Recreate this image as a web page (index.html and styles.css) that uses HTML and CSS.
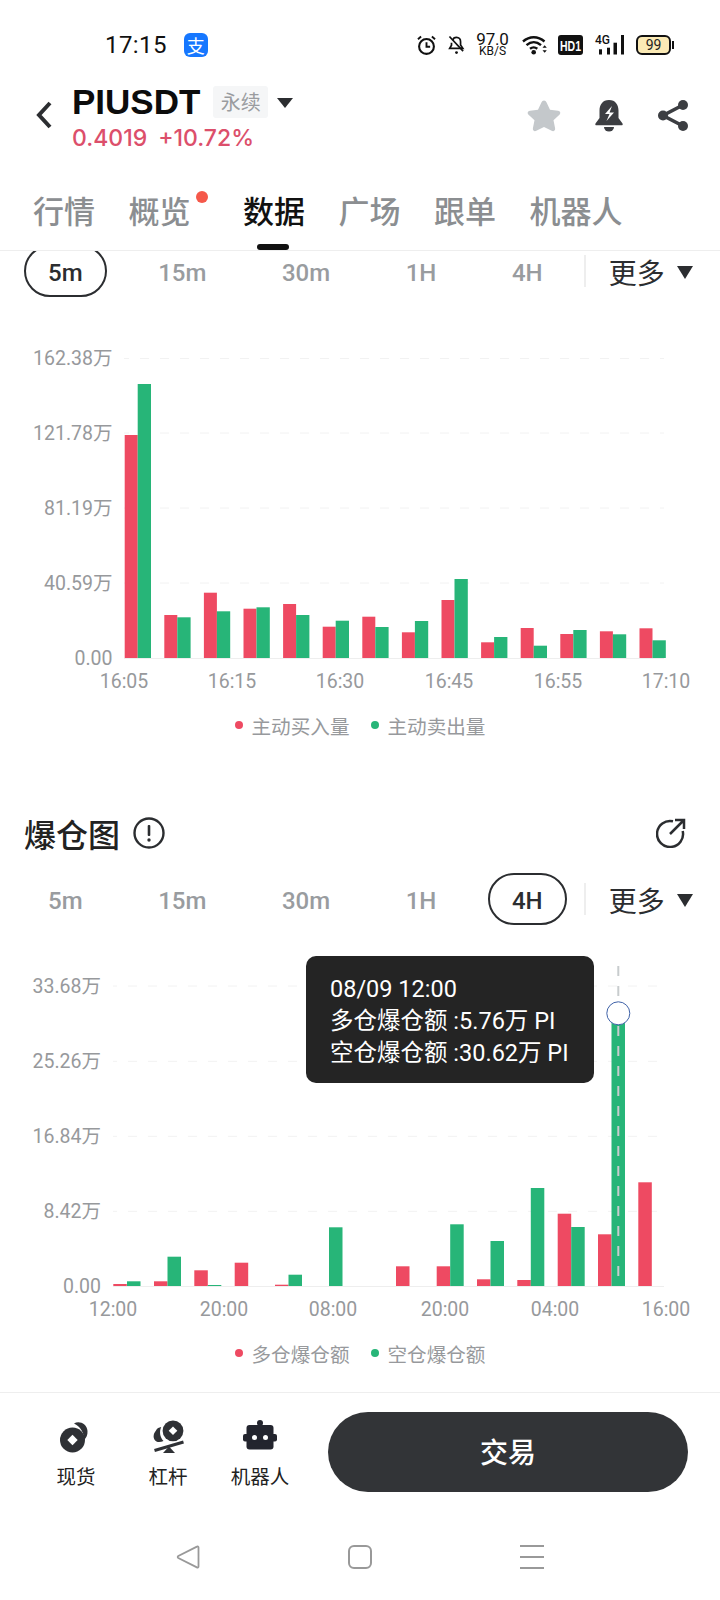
FILE: index.html
```html
<!DOCTYPE html>
<html lang="zh-CN">
<head>
<meta charset="utf-8">
<title>PIUSDT</title>
<link rel="stylesheet" href="styles.css">
</head>
<body>
<div class="phone">
  <div class="status">
    <span class="clock">17:15</span>
    <span class="alipay">支</span>
    <div class="status-icons">
      <svg class="ico" width="19" height="20" viewBox="0 0 20 21"><circle cx="10" cy="12" r="7.8" fill="none" stroke="#111" stroke-width="2.200"/><path d="M10 7.500V12.400H13.800M1 4.500 4.300 1.600M19 4.500 15.700 1.600" fill="none" stroke="#111" stroke-width="2"/></svg>
      <svg class="ico" width="17" height="20" viewBox="0 0 18 21"><path d="M5 5.500C5.500 3.500 7 2.500 9 2.500c2.800 0 4.300 2 4.300 4.500v3.500l2.400 3.500H1.800l1.900-3.200V8" fill="none" stroke="#111" stroke-width="1.800"/><path d="M1.500 1.500 16 17" stroke="#111" stroke-width="1.800"/><circle cx="9" cy="18.500" r="1.500" fill="#111"/></svg>
      <div class="speed"><span class="speed-n">97.0</span><span class="speed-u">KB/S</span></div>
      <svg class="ico wifi" width="25" height="20" viewBox="0 0 25 20"><path d="M1 6.500C7.500.8 16 .8 22.500 6.500M4.500 10.200C9 6.300 14.500 6.300 19 10.200M8 13.800C10.300 12 13 12 15.300 13.800" fill="none" stroke="#111" stroke-width="2.400"/><circle cx="11.700" cy="17.300" r="2.300" fill="#111"/><path d="M20.500 12.800h4.300l-2.150-2.600zM20.500 15.200h4.300l-2.150 2.600z" fill="#111"/></svg>
      <svg class="ico" width="25" height="20" viewBox="0 0 25 20"><rect width="25" height="20" rx="3" fill="#111"/><text class="hd-t" x="2" y="15.500" textLength="21" lengthAdjust="spacingAndGlyphs">HD1</text></svg>
      <svg class="ico" width="29" height="20" viewBox="0 0 29 20"><text class="sig-t" x="0" y="9">4G</text><rect x="4" y="14.300" width="3" height="5.200" fill="#111"/><rect x="12" y="12.700" width="3" height="6.800" fill="#111"/><rect x="18.500" y="7.700" width="3.500" height="11.800" fill="#111"/><rect x="26" y="0" width="3" height="19.500" fill="#111"/></svg>
      <div class="battery"><span class="battery-body">99</span><span class="battery-nub"></span></div>
    </div>
  </div>

  <div class="header">
    <svg class="back" width="16" height="28" viewBox="0 0 16 28"><path d="M14 2 3 14l11 12" fill="none" stroke="#2c2e31" stroke-width="4"/></svg>
    <div class="symbol">
      <div class="symbol-top">
        <span class="pair">PIUSDT</span>
        <span class="tag">永续</span>
        <span class="caret caret-sm"></span>
      </div>
      <div class="price"><span>0.4019</span><span>+10.72%</span></div>
    </div>
    <div class="header-actions">
      <svg class="star" width="36" height="34" viewBox="0 0 36 34"><path d="M18 1.500c1.200 0 2 .8 2.600 2l3.400 7.300 8 1c2.300.3 3 2.400 1.400 4l-5.900 5.500 1.600 8c.4 2.200-1.500 3.600-3.400 2.500L18 28l-7.700 3.800c-1.900 1.100-3.800-.3-3.400-2.500l1.600-8L2.600 15.800c-1.600-1.600-.9-3.700 1.400-4l8-1 3.400-7.300c.6-1.200 1.400-2 2.600-2z" fill="#c4c8cb"/></svg>
      <svg width="30" height="34" viewBox="0 0 30 34"><path d="M15 1c6.500 0 9.500 5 9.500 10.500V19l4 5.500c.6 1 0 1.800-1 1.800h-25c-1 0-1.600-.8-1-1.800l4-5.500v-7.500C5.500 6 8.500 1 15 1z" fill="#3c3e42"/><path d="M10 28h10a5 4.500 0 0 1-10 0z" fill="#3c3e42"/><path d="M18 7 11 15h4.500l-3 7 7.500-8.500h-4.500z" fill="#fff"/></svg>
      <svg width="32" height="34" viewBox="0 0 32 34"><path d="M26 6 6 16.500 26 27" fill="none" stroke="#3c3e42" stroke-width="3.600"/><circle cx="26" cy="6" r="5" fill="#3c3e42"/><circle cx="6" cy="16.500" r="5" fill="#3c3e42"/><circle cx="26" cy="27" r="5" fill="#3c3e42"/></svg>
    </div>
  </div>

  <div class="tabs">
    <span class="tab">行情</span>
    <span class="tab tab-dot">概览</span>
    <span class="tab tab-on">数据</span>
    <span class="tab">广场</span>
    <span class="tab">跟单</span>
    <span class="tab">机器人</span>
  </div>

  <div class="main">
    <div class="periods periods-first">
      <span class="period period-on">5m</span>
      <span class="period">15m</span>
      <span class="period">30m</span>
      <span class="period">1H</span>
      <span class="period">4H</span>
      <span class="divider"></span>
      <span class="more">更多</span>
      <span class="caret"></span>
    </div>

    <svg class="chart" width="720" height="411" viewBox="0 297 720 411">
      <g class="grid"><path d="M124 358.500H664M124 433H664M124 508H664M124 583H664"/></g>
      <path class="base" d="M124 658.500H664"/>
      <g class="red">
        <rect x="124.700" y="435" width="13" height="223"/><rect x="164.300" y="615" width="13" height="43"/><rect x="203.900" y="592.700" width="13" height="65.300"/><rect x="243.500" y="608.700" width="13" height="49.300"/><rect x="283.100" y="604" width="13" height="54"/><rect x="322.700" y="626.700" width="13" height="31.300"/><rect x="362.300" y="616.700" width="13" height="41.300"/><rect x="401.900" y="632.300" width="13" height="25.700"/><rect x="441.500" y="600" width="13" height="58"/><rect x="481.100" y="642.300" width="13" height="15.700"/><rect x="520.700" y="628" width="13" height="30"/><rect x="560.300" y="634" width="13" height="24"/><rect x="599.900" y="631.300" width="13" height="26.700"/><rect x="639.500" y="628.300" width="13" height="29.700"/>
      </g>
      <g class="green">
        <rect x="137.700" y="384" width="13.300" height="274"/><rect x="177.300" y="617.300" width="13.300" height="40.700"/><rect x="216.900" y="611.300" width="13.300" height="46.700"/><rect x="256.500" y="607.300" width="13.300" height="50.700"/><rect x="296.100" y="615" width="13.300" height="43"/><rect x="335.700" y="620.700" width="13.300" height="37.300"/><rect x="375.300" y="627" width="13.300" height="31"/><rect x="414.900" y="621" width="13.300" height="37"/><rect x="454.500" y="579" width="13.300" height="79"/><rect x="494.100" y="637" width="13.300" height="21"/><rect x="533.700" y="645.700" width="13.300" height="12.300"/><rect x="573.300" y="630" width="13.300" height="28"/><rect x="612.900" y="634.300" width="13.300" height="23.700"/><rect x="652.500" y="640.300" width="13.300" height="17.700"/>
      </g>
      <g class="axis-y">
        <text x="112.500" y="365">162.38万</text><text x="112.500" y="439.500">121.78万</text><text x="112.500" y="514.500">81.19万</text><text x="112.500" y="589.500">40.59万</text><text x="112.500" y="665">0.00</text>
      </g>
      <g class="axis-x">
        <text x="124" y="688">16:05</text><text x="232" y="688">16:15</text><text x="340" y="688">16:30</text><text x="449" y="688">16:45</text><text x="558" y="688">16:55</text><text x="666" y="688">17:10</text>
      </g>
    </svg>
    <div class="legend">
      <span class="dot dot-red"></span><span>主动买入量</span>
      <span class="dot dot-green"></span><span>主动卖出量</span>
    </div>

    <div class="section-head">
      <span class="section-title">爆仓图</span>
      <svg class="info" width="32" height="32" viewBox="0 0 32 32"><circle cx="16" cy="16" r="14.500" fill="none" stroke="#2b2d30" stroke-width="2.400"/><rect x="14.700" y="8" width="2.600" height="11" rx="1" fill="#2b2d30"/><circle cx="16" cy="23" r="1.700" fill="#2b2d30"/></svg>
      <svg class="open" width="30" height="30" viewBox="0 0 30 30"><path d="M17 3.300A13 13 0 1 0 26.700 13" fill="none" stroke="#2b2d30" stroke-width="2.500"/><path d="M14 16 27 3M19 2h9v9" fill="none" stroke="#2b2d30" stroke-width="2.500"/></svg>
    </div>

    <div class="periods">
      <span class="period">5m</span>
      <span class="period">15m</span>
      <span class="period">30m</span>
      <span class="period">1H</span>
      <span class="period period-on">4H</span>
      <span class="divider"></span>
      <span class="more">更多</span>
      <span class="caret"></span>
    </div>

    <div class="chart-wrap">
      <svg class="chart" width="720" height="411" viewBox="0 925 720 411">
        <g class="grid grid-b"><path d="M113 986H664M113 1061.300H664M113 1136.300H664M113 1211.300H664"/></g>
        <path class="base" d="M113 1286.500H664"/>
        <g class="red">
          <rect x="113.300" y="1284" width="13.500" height="2"/><rect x="154" y="1281.300" width="13.500" height="4.700"/><rect x="194.300" y="1270.300" width="13.500" height="15.700"/><rect x="234.700" y="1262.700" width="13.500" height="23.300"/><rect x="275" y="1284.700" width="13.500" height="1.300"/><rect x="396" y="1266.300" width="13.500" height="19.700"/><rect x="436.700" y="1266.300" width="13.500" height="19.700"/><rect x="477" y="1279.300" width="13.500" height="6.700"/><rect x="517.300" y="1280" width="13.500" height="6"/><rect x="557.700" y="1213.700" width="13.500" height="72.300"/><rect x="598" y="1234.300" width="13.500" height="51.700"/><rect x="638.300" y="1182.300" width="13.500" height="103.700"/>
        </g>
        <g class="green">
          <rect x="127" y="1281.300" width="13.500" height="4.700"/><rect x="167.500" y="1256.700" width="13.500" height="29.300"/><rect x="207.800" y="1285" width="13.500" height="1"/><rect x="288.500" y="1274.700" width="13.500" height="11.300"/><rect x="329" y="1227.300" width="13.500" height="58.700"/><rect x="450.200" y="1224.300" width="13.500" height="61.700"/><rect x="490.500" y="1241" width="13.500" height="45"/><rect x="530.800" y="1188" width="13.500" height="98"/><rect x="571.200" y="1227" width="13.500" height="59"/><rect x="611.500" y="1013" width="13.500" height="273"/>
        </g>
        <path class="cross" d="M618.300 966V1276"/>
        <circle class="cross-dot" cx="618.300" cy="1013.300" r="11.500"/>
        <g class="axis-y">
          <text x="101" y="992.700">33.68万</text><text x="101" y="1067.700">25.26万</text><text x="101" y="1142.700">16.84万</text><text x="101" y="1217.700">8.42万</text><text x="101" y="1292.700">0.00</text>
        </g>
        <g class="axis-x">
          <text x="113" y="1316">12:00</text><text x="224" y="1316">20:00</text><text x="333" y="1316">08:00</text><text x="445" y="1316">20:00</text><text x="555" y="1316">04:00</text><text x="666" y="1316">16:00</text>
        </g>
      </svg>
      <div class="tooltip">
        <div>08/09 12:00</div>
        <div>多仓爆仓额 :5.76万 PI</div>
        <div>空仓爆仓额 :30.62万 PI</div>
      </div>
    </div>
    <div class="legend">
      <span class="dot dot-red"></span><span>多仓爆仓额</span>
      <span class="dot dot-green"></span><span>空仓爆仓额</span>
    </div>
  </div>

  <div class="bottom">
    <div class="actions">
      <div class="action">
        <svg width="40" height="40" viewBox="0 0 40 40"><path d="M18 3.500C23 .5 31 3.500 31.500 11c.3 4-1.200 7-3.500 9 .6-6.500-4-14-10-16.500z" fill="#2f3135"/><circle cx="16.500" cy="20" r="12.500" fill="#2f3135"/><path d="M16.500 14.800 21.700 20l-5.200 5.200L11.300 20z" fill="#fff"/></svg>
        <span class="action-label">现货</span>
      </div>
      <div class="action">
        <svg width="40" height="40" viewBox="0 0 40 40"><path d="M8 10.500c1-2.300 3-3 5.200-3.500-2 4.500-1.400 10 2.300 14-2.300 1-5 1.500-7 .5C4.500 19 5 14 8 10.500z" fill="#2f3135"/><circle cx="25" cy="10.800" r="10.400" fill="#2f3135"/><path d="M25 6.500 29.300 10.800 25 15.100 20.700 10.800z" fill="#fff"/><path d="M6.500 30.500 35.500 22" stroke="#2f3135" stroke-width="3" fill="none"/><path d="M21 26.500l6 6.500H15z" fill="#2f3135"/></svg>
        <span class="action-label">杠杆</span>
      </div>
      <div class="action">
        <svg width="40" height="40" viewBox="0 0 40 40"><circle cx="20" cy="3" r="3" fill="#23252e"/><rect x="18.700" y="3" width="2.600" height="4" fill="#23252e"/><rect x="6.500" y="5" width="27" height="24.500" rx="3" fill="#23252e"/><rect x="3" y="14" width="34" height="7.500" rx="2" fill="#23252e"/><circle cx="14.500" cy="17.500" r="2.500" fill="#fff"/><circle cx="25.500" cy="17.500" r="2.500" fill="#fff"/></svg>
        <span class="action-label">机器人</span>
      </div>
      <span class="trade">交易</span>
    </div>
    <div class="navbar">
      <svg width="24" height="24" viewBox="0 0 24 24"><path d="M22.500 2.500v19c0 1-.8 1.400-1.600.9L2.300 13c-.8-.5-.8-1.500 0-2L20.900 1.600c.8-.5 1.600-.1 1.600.9z" fill="none" stroke="#999" stroke-width="1.800"/></svg>
      <svg width="24" height="24" viewBox="0 0 24 24"><rect x="1" y="1" width="22" height="22" rx="5" fill="none" stroke="#999" stroke-width="2"/></svg>
      <svg width="24" height="24" viewBox="0 0 24 24"><path d="M0 1h24M0 12h24M0 23h24" stroke="#999" stroke-width="2"/></svg>
    </div>
  </div>
</div>
</body>
</html>
```

FILE: styles.css
```css
* { box-sizing: border-box; }
html, body { margin: 0; padding: 0; background: #fff; }
.phone {
  width: 720px;
  height: 1600px;
  display: flex;
  flex-direction: column;
  overflow: hidden;
  background: #fff;
  font-family: "Noto Sans CJK SC", Roboto, sans-serif;
  color: #222;
}
svg { display: block; flex: none; }
.ico { overflow: visible; }

/* status bar */
.status {
  height: 80px;
  padding: 10px 46px 0 105px;
  display: flex;
  align-items: center;
  flex: none;
}
.clock { font: 400 24px Roboto, sans-serif; color: #111; letter-spacing: .4px; }
.alipay {
  width: 24px; height: 24px; margin-left: 17px;
  background: #1677ff; border-radius: 6px; color: #fff;
  font-size: 18px; line-height: 24px; text-align: center;
}
.status-icons { margin-left: auto; display: flex; align-items: center; gap: 12px; }
.speed { display: flex; flex-direction: column; align-items: center; width: 29px; height: 24px; margin: -1px 3px 0 1px; color: #111; font-family: Roboto, sans-serif; }
.speed-n { font-size: 17px; line-height: 13px; height: 13px; font-weight: 400; letter-spacing: -.2px; }
.speed-u { font-size: 12px; line-height: 11px; height: 11px; font-weight: 400; white-space: nowrap; }
.wifi { margin-right: -1px; }
.hd-t { font: 700 15px "Liberation Sans", sans-serif; fill: #fff; }
.sig-t { font: 500 12px Roboto, sans-serif; fill: #111; }
.battery { display: flex; align-items: center; gap: 1px; }
.battery-body {
  width: 35px; height: 20px; border: 2px solid #111; border-radius: 6px; background: #fbeab5;
  font: 400 14px/16px Roboto, sans-serif; text-align: center; color: #222;
}
.battery-nub { width: 2px; height: 8px; background: #111; }

/* header */
.header {
  height: 90px;
  padding: 6px 31px 0 36px;
  display: flex;
  align-items: flex-start;
  flex: none;
}
.back { margin-top: 15px; }
.symbol { margin-left: 20px; display: flex; flex-direction: column; }
.symbol-top { display: flex; align-items: center; height: 32px; }
.pair { font: 700 35px/32px "Liberation Sans", Arial, sans-serif; color: #0c0c0c; }
.tag {
  margin-left: 13px; width: 55px; height: 32px; background: #f5f6f7; border-radius: 3px;
  color: #9a9c9f; font-size: 20px; line-height: 32px; text-align: center;
}
.caret {
  width: 0; height: 0;
  border-left: 8px solid transparent; border-right: 8px solid transparent;
  border-top: 13px solid #2b2d30;
  margin-left: 12px;
}
.caret-sm { margin-left: 9px; margin-top: 2px; border-top-width: 10px; }
.price {
  margin-top: 3px; height: 34px; display: flex; gap: 11px;
  font: 500 23px/34px Inter, Roboto, sans-serif; color: #dc4f6b;
}
.header-actions { margin-left: auto; margin-top: 13px; display: flex; gap: 33px; align-items: center; }
.star { margin-right: -1px; }

/* tabs */
.tabs {
  height: 81px;
  padding: 18px 0 0 33px;
  display: flex;
  gap: 33.500px;
  border-bottom: 1px solid #eee;
  flex: none;
}
.tab { position: relative; height: 44px; font-size: 31px; line-height: 44px; font-weight: 500; color: #8b8e91; }
.tab-on { color: #111; }
.tab-on::after {
  content: ""; position: absolute; left: 14px; top: 56px; width: 32px; height: 6px; border-radius: 3px; background: #111;
}
.tab-dot { margin-right: 19px; }
.tab-dot::after {
  content: ""; position: absolute; right: -17px; top: 3px; width: 12px; height: 12px; border-radius: 50%; background: #f5584a;
}

/* main */
.main { flex: 1; overflow: hidden; min-height: 0; }
.periods { height: 52px; padding-left: 24px; display: flex; align-items: center; gap: 27.600px; }
.periods-first { margin-top: -6px; }
.period {
  padding: 0 22px; height: 52px; border: 2px solid transparent; border-radius: 26px;
  font: 500 24px/52px Roboto, sans-serif; color: #999c9f;
}
.period-on { border-color: #2b2d30; color: #2b2d30; }
.divider { width: 2px; height: 32px; background: #eee; margin-left: -10px; }
.more { margin-left: -5px; font-size: 28px; color: #2b2d30; line-height: 52px; position: relative; top: 1px; }
.periods .caret { margin-left: -15px; margin-top: 3px; }

/* charts */
.grid path { fill: none; stroke: #f2f2f2; stroke-width: 1; stroke-dasharray: 9 11; stroke-dashoffset: 4; }
.grid-b path { stroke-dashoffset: 5; }
.base { fill: none; stroke: #eee; stroke-width: 1; }
.red rect { fill: #ee4a62; }
.green rect { fill: #27b578; }
.axis-y text, .axis-x text { font: 400 19.500px Roboto, "Noto Sans CJK SC", sans-serif; fill: #97999c; }
.axis-y text { text-anchor: end; }
.axis-x text { text-anchor: middle; }
.cross { fill: none; stroke: #c8ccce; stroke-width: 2; stroke-dasharray: 10 10; }
.cross-dot { fill: #fff; stroke: #3f62a8; stroke-width: 1; }

.legend {
  height: 34px; display: flex; align-items: center; justify-content: center;
  font-size: 19.600px; color: #97999c;
}
.dot { width: 8px; height: 8px; border-radius: 50%; margin-right: 9px; }
.dot-red { background: #ee4a62; }
.dot-green { background: #27b578; margin-left: 21px; }

.section-head {
  margin-top: 60px; height: 60px; padding: 1px 34px 0 24px;
  display: flex; align-items: center;
}
.section-title { font-size: 32px; font-weight: 500; color: #222; }
.info { margin-left: 13px; }
.open { margin-left: auto; }
.section-head + .periods { margin-top: 11px; }

.chart-wrap { position: relative; }
.tooltip {
  position: absolute; left: 306px; top: 31px; width: 288px; height: 127px;
  padding: 17px 24px 0; background: #242424; border-radius: 10px; color: #fff;
  font: 400 23.500px/32px Roboto, "Noto Sans CJK SC", sans-serif; white-space: nowrap;
}

/* bottom */
.bottom { height: 208px; border-top: 1px solid #eee; flex: none; }
.actions { padding: 19px 0 0 46px; display: flex; height: 99px; gap: 32px; }
.action { width: 60px; display: flex; flex-direction: column; align-items: center; padding-top: 8px; }
.action-label { font-size: 19.500px; line-height: 32px; color: #222; white-space: nowrap; }
.trade {
  margin-left: 6px; width: 360px; height: 80px; border-radius: 40px; background: #323437; color: #fff;
  font-size: 28px; font-weight: 500; line-height: 78px; text-align: center;
}
.navbar { margin-top: 53px; padding-left: 176px; display: flex; gap: 148px; }
```
